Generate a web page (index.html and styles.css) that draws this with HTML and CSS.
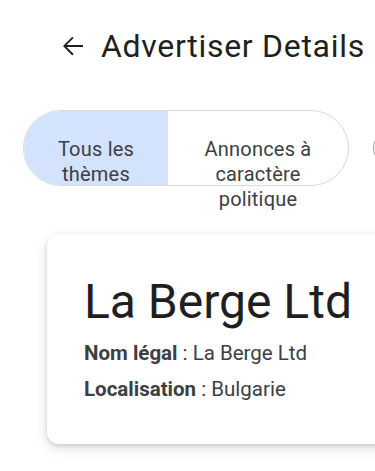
FILE: index.html
```html
<!DOCTYPE html>
<html lang="fr">
<head>
<meta charset="utf-8">
<link rel="stylesheet" href="styles.css">
</head>
<body>
<div class="page">
  <header class="header">
    <svg class="back" viewBox="0 0 24 24" width="30" height="30" aria-hidden="true"><path d="M20 11.2H6.9l5.6-5.6L11.4 4.5 4 12l7.4 7.5 1.1-1.1-5.6-5.6H20z" fill="#1f1f1f"/></svg>
    <h1 class="title">Advertiser Details</h1>
  </header>
  <div class="tabs">
    <div class="toggle">
      <div class="seg seg-active seg-left">Tous les thèmes</div>
      <div class="seg seg-right">Annonces à caractère politique</div>
    </div>
    <div class="circle-btn"></div>
  </div>
  <section class="card">
    <h2 class="name">La Berge Ltd</h2>
    <p class="info"><b>Nom légal</b> : La Berge Ltd</p>
    <p class="info"><b>Localisation</b> : Bulgarie</p>
  </section>
</div>
</body>
</html>
```

FILE: styles.css
```css
html, body {
  margin: 0;
  padding: 0;
  overflow: hidden;
  background: #ffffff;
}
body {
  font-family: Roboto, "Liberation Sans", sans-serif;
  color: #1f1f1f;
  width: 375px;
  height: 471px;
}
.page {
  width: 375px;
}
.header {
  display: flex;
  align-items: center;
  padding: 26px 0 0 58px;
  gap: 13px;
  height: 40px;
}
.back {
  flex: none;
  display: block;
}
.title {
  margin: 0;
  font-weight: 400;
  font-size: 32px;
  line-height: 40px;
  letter-spacing: 0.7px;
  white-space: nowrap;
  color: #1f1f1f;
}
.tabs {
  display: flex;
  align-items: center;
  gap: 24px;
  margin-top: 44px;
  padding-left: 23px;
  width: 600px;
}
.toggle {
  display: flex;
  flex: none;
  height: 74px;
  border: 1px solid #d6d8da;
  border-radius: 38px;
  position: relative;
}
.seg {
  box-sizing: border-box;
  padding: 26px 18px 0;
  font-size: 20px;
  line-height: 25px;
  letter-spacing: 0.2px;
  text-align: center;
  color: #3c4043;
  height: 74px;
}
.seg-left {
  width: 144px;
  border-radius: 38px 0 0 38px;
}
.seg-active {
  background: #d3e3fd;
}
.seg-right {
  width: 180px;
  border-radius: 0 38px 38px 0;
  padding-left: 22px;
  padding-right: 22px;
}
.circle-btn {
  flex: none;
  width: 34px;
  height: 34px;
  border-radius: 50%;
  border: 1px solid #9aa0a6;
}
.card {
  box-sizing: border-box;
  margin: 48px 0 0 47px;
  width: 420px;
  height: 210px;
  padding: 40px 36px 0 37px;
  border-radius: 12px;
  background: #fff;
  box-shadow: 0 2px 4px rgba(0,0,0,0.12), 0 4px 14px rgba(0,0,0,0.12);
}
.name {
  margin: 0;
  font-weight: 400;
  font-size: 48px;
  line-height: 56px;
  color: #1f1f1f;
  white-space: nowrap;
}
.info {
  margin: 0;
  font-size: 20.5px;
  line-height: 36px;
  color: #3c4043;
  white-space: nowrap;
}
.info:first-of-type {
  margin-top: 5px;
}
.info b {
  font-weight: 700;
}
```
